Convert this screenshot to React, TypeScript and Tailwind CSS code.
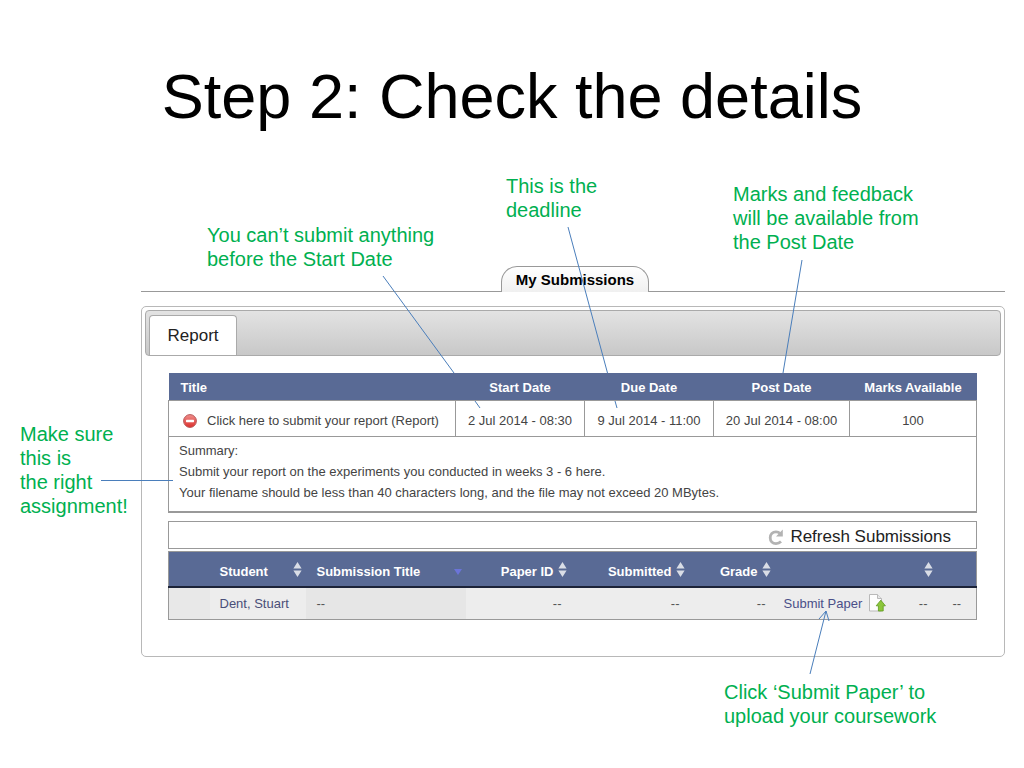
import { ReactNode } from 'react';

interface CalloutProps {
  className: string;
  children: ReactNode;
}

interface PaperRow {
  student: string;
  title: string;
  paperId: string;
  submitted: string;
  grade: string;
}

const papers: PaperRow[] = [
  { student: 'Dent, Stuart', title: '--', paperId: '--', submitted: '--', grade: '--' },
];

const dates = ['2 Jul 2014 - 08:30', '9 Jul 2014 - 11:00', '20 Jul 2014 - 08:00', '100'];

function Callout({ className, children }: CalloutProps) {
  return (
    <p className={`absolute whitespace-nowrap text-[20px] leading-6 text-[#00b050] ${className}`}>
      {children}
    </p>
  );
}

function SortIcon() {
  return (
    <svg width="9" height="15" viewBox="0 0 9 15" className="mb-1 shrink-0" aria-hidden="true">
      <path d="M4.5 0 L8.6 6.6 H0.4 Z M0.4 8.4 H8.6 L4.5 15 Z" fill="#d9dde6" />
    </svg>
  );
}

function SortedIcon() {
  return (
    <svg width="8" height="6" viewBox="0 0 8 6" className="shrink-0" aria-hidden="true">
      <path d="M0 0 H8 L4 6 Z" fill="#6b74d8" />
    </svg>
  );
}

function NoEntryIcon() {
  return (
    <svg width="14" height="14" viewBox="0 0 14 14" className="shrink-0" aria-hidden="true">
      <defs>
        <linearGradient id="noEntry" x1="0" y1="0" x2="0" y2="1">
          <stop offset="0" stopColor="#ef8f8c" />
          <stop offset="1" stopColor="#dc2f2b" />
        </linearGradient>
      </defs>
      <circle cx="7" cy="7" r="6.4" fill="url(#noEntry)" stroke="#b8595a" strokeWidth="1" />
      <rect x="3" y="5.8" width="8" height="2.4" rx="0.6" fill="#fff" />
    </svg>
  );
}

function RefreshIcon() {
  return (
    <svg width="16" height="18" viewBox="0 0 16 18" className="shrink-0" aria-hidden="true">
      <path
        d="M12.2 5.6 C10.8 4.2 9.4 3.8 8 3.8 C4.6 3.8 2.2 6.4 2.2 9.8 C2.2 13.2 4.6 15.6 8 15.6 C10 15.6 11.6 15 13 13.6"
        fill="none"
        stroke="#b3b3b3"
        strokeWidth="2.8"
      />
      <path d="M14.8 1.4 V8.6 H8 Z" fill="#b3b3b3" />
    </svg>
  );
}

function UploadIcon() {
  return (
    <svg width="18" height="18" viewBox="0 0 18 18" className="shrink-0" aria-hidden="true">
      <path d="M1.5 0.5 H9.5 L13.5 4.5 V17 H1.5 Z" fill="#fdfdfd" stroke="#b9b9b9" />
      <path d="M9.5 0.5 V4.5 H13.5" fill="#e8e8e8" stroke="#b9b9b9" />
      <path d="M12.8 6.2 L17.4 11.8 H15.2 V17 H10.4 V11.8 H8.2 Z" fill="#8cc63a" stroke="#5d9a1c" strokeWidth="0.8" />
    </svg>
  );
}

function SortHeader({ children }: { children: ReactNode }) {
  return (
    <th className="pr-[5px] pt-[6px]">
      <div className="flex items-center justify-end gap-1">
        {children}
        <SortIcon />
      </div>
    </th>
  );
}

export default function App() {
  return (
    <main className="relative min-h-screen bg-white font-['Liberation_Sans',Arial,sans-serif] text-black">
      <h1 className="pt-[60px] text-center text-[63px] leading-[72px]">Step 2: Check the details</h1>

      <div className="ml-[141px] mr-[19px] pt-[134px]">
        <div className="flex justify-center border-b border-[#999] pl-1">
          <button className="-mb-px h-[26px] w-[148px] rounded-t-2xl border border-b-0 border-[#999] bg-linear-to-b from-white to-[#f0f0f0] pt-[2px] text-[15px] font-bold">
            My Submissions
          </button>
        </div>

        <section className="mt-[14px] rounded-[5px] border border-[#b8b8b8] p-[3px] pb-9">
          <div className="flex h-[46px] rounded border border-[#aaa] bg-linear-to-b from-[#e3e3e3] to-[#c8c8c8] pl-[3px] pt-1">
            <button className="w-[88px] rounded-t border border-b-0 border-[#aaa] bg-white text-[17px] text-[#222]">
              Report
            </button>
          </div>

          <div className="ml-[23px] mr-6 mt-[17px]">
            <table className="w-full table-fixed border-collapse text-[13px] text-[#444]">
              <colgroup>
                <col />
                <col className="w-[129px]" />
                <col className="w-[129px]" />
                <col className="w-[136px]" />
                <col className="w-[127px]" />
              </colgroup>
              <thead>
                <tr className="h-[27px] bg-[#596a95] text-white">
                  <th className="pl-3 pt-[2px] text-left">Title</th>
                  <th className="pt-[2px]">Start Date</th>
                  <th className="pt-[2px]">Due Date</th>
                  <th className="pt-[2px]">Post Date</th>
                  <th className="pt-[2px]">Marks Available</th>
                </tr>
              </thead>
              <tbody>
                <tr className="h-9">
                  <td className="border border-[#999] pl-[14px] pt-[6px]">
                    <a href="#submit" className="flex items-center gap-[10px]">
                      <NoEntryIcon />
                      Click here to submit your report (Report)
                    </a>
                  </td>
                  {dates.map((date) => (
                    <td key={date} className="border border-[#999] pt-[6px] text-center">
                      {date}
                    </td>
                  ))}
                </tr>
                <tr>
                  <td colSpan={5} className="border border-b-2 border-[#999] px-[10px] pb-2 pt-[3px] leading-[21px]">
                    <p>Summary:</p>
                    <p>Submit your report on the experiments you conducted in weeks 3 - 6 here.</p>
                    <p>Your filename should be less than 40 characters long, and the file may not exceed 20 MBytes.</p>
                  </td>
                </tr>
              </tbody>
            </table>

            <div className="mt-2 flex h-7 justify-end border border-[#999] pr-[25px]">
              <button className="flex items-center gap-[6px] pt-1 text-[17px] leading-6 text-[#222]">
                <RefreshIcon />
                Refresh Submissions
              </button>
            </div>

            <table className="mt-[2px] w-full table-fixed border-collapse border border-[#999] text-[13px]">
              <colgroup>
                <col className="w-[41px]" />
                <col className="w-[96px]" />
                <col />
                <col className="w-[106px]" />
                <col className="w-[118px]" />
                <col className="w-[86px]" />
                <col className="w-[126px]" />
                <col className="w-[36px]" />
                <col className="w-[39px]" />
              </colgroup>
              <thead>
                <tr className="h-9 border-b-2 border-[#1c2338] bg-[#596a95] text-white">
                  <td />
                  <th className="pl-[10px] pr-1 pt-[6px]">
                    <div className="flex items-center justify-between">
                      Student
                      <SortIcon />
                    </div>
                  </th>
                  <th className="pl-[11px] pr-1 pt-[6px]">
                    <div className="flex items-center justify-between">
                      Submission Title
                      <SortedIcon />
                    </div>
                  </th>
                  <SortHeader>Paper ID</SortHeader>
                  <SortHeader>Submitted</SortHeader>
                  <SortHeader>Grade</SortHeader>
                  <td />
                  <SortHeader>{null}</SortHeader>
                  <td />
                </tr>
              </thead>
              <tbody>
                {papers.map((paper) => (
                  <tr key={paper.student} className="h-8 bg-[#ededed] text-[#555]">
                    <td className="bg-[#e8e8e8]" />
                    <td className="pl-[10px] text-[#4a4f78]">{paper.student}</td>
                    <td className="bg-[#e6e6e6] pl-[11px]">{paper.title}</td>
                    <td className="pr-[10px] text-right">{paper.paperId}</td>
                    <td className="pr-[10px] text-right">{paper.submitted}</td>
                    <td className="pr-[10px] text-right">{paper.grade}</td>
                    <td className="pl-2">
                      <a href="#upload" className="flex items-center gap-[6px] text-[#4a4f88]">
                        Submit Paper
                        <UploadIcon />
                      </a>
                    </td>
                    <td className="pr-[10px] text-right">--</td>
                    <td className="text-center">--</td>
                  </tr>
                ))}
              </tbody>
            </table>
          </div>
        </section>
      </div>

      {/* Notes around the screen */}
      <Callout className="left-[207px] top-[223px]">
        You can’t submit anything
        <br />
        before the Start Date
      </Callout>
      <Callout className="left-[506px] top-[174px]">
        This is the
        <br />
        deadline
      </Callout>
      <Callout className="left-[733px] top-[182px]">
        Marks and feedback
        <br />
        will be available from
        <br />
        the Post Date
      </Callout>
      <Callout className="left-5 top-[422px]">
        Make sure
        <br />
        this is
        <br />
        the right
        <br />
        assignment!
      </Callout>
      <Callout className="left-[724px] top-[680px]">
        Click ‘Submit Paper’ to
        <br />
        upload your coursework
      </Callout>

      {/* Pointers from the notes, passing behind the table header */}
      <svg
        width="1024"
        height="768"
        viewBox="0 0 1024 768"
        fill="none"
        stroke="#4a7ebb"
        className="pointer-events-none absolute left-0 top-0"
        aria-hidden="true"
      >
        <path d="M383 276 L454 373 M475 401 L480 408" />
        <path d="M568 227 L607.5 373 M615 401 L617 408" />
        <path d="M802 260 L783 373" />
        <path d="M101 480.5 H173" />
        <path d="M810 674 L826 611 M819 619 L826 611 L829 621" />
      </svg>
    </main>
  );
}
